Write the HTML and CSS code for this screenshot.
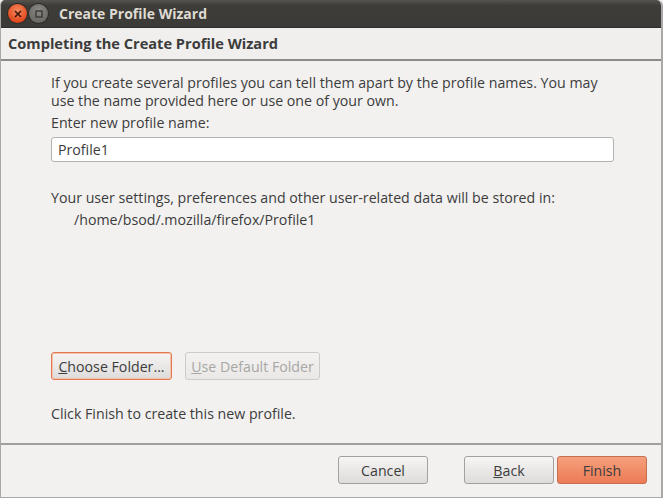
FILE: index.html
```html
<!DOCTYPE html>
<html lang="en">
<head>
	<meta charset="UTF-8">
	<title>Create Profile Wizard</title>
	<link rel="stylesheet" href="styles.css">
</head>
<body>
	<div class="window">
		<div class="titlebar">
			<span class="btn-close">
				<svg width="8" height="8" viewBox="0 0 8 8"><path d="M1 1L7 7M7 1L1 7" stroke="#3a1a10" stroke-width="1.6"/></svg>
			</span>
			<span class="btn-min">
				<svg width="8" height="8" viewBox="0 0 8 8"><rect x="1" y="1" width="6" height="6" fill="none" stroke="#3b3a36" stroke-width="1.4"/></svg>
			</span>
			<span class="title-text">Create Profile Wizard</span>
		</div>
		<div class="wizard-header">Completing the Create Profile Wizard</div>
		<div class="wizard-body">
			<p class="intro">If you create several profiles you can tell them apart by the profile names. You may use the name provided here or use one of your own.</p>
			<label class="field-label">Enter new profile name:</label>
			<input type="text" class="name-input" value="Profile1">
			<p class="store-text">Your user settings, preferences and other user-related data will be stored in:</p>
			<p class="store-path">/home/bsod/.mozilla/firefox/Profile1</p>
			<div class="folder-buttons">
				<button class="button focused"><u>C</u>hoose Folder...</button>
				<button class="button disabled"><u>U</u>se Default Folder</button>
			</div>
			<p class="finish-text">Click Finish to create this new profile.</p>
		</div>
		<div class="wizard-footer">
			<button class="button wide">Cancel</button>
			<div class="nav-buttons">
				<button class="button wide"><u>B</u>ack</button>
				<button class="button wide primary">Finish</button>
			</div>
		</div>
	</div>
</body>
</html>
```
FILE: styles.css
```css
* {
	margin: 0;
	padding: 0;
	box-sizing: border-box;
}
body {
	width: 663px;
	height: 498px;
	background: #f2f1f0;
	font-family: "Open Sans", "DejaVu Sans", sans-serif;
	font-size: 14.2px;
	color: #3c3c3c;
	overflow: hidden;
}
.window {
	width: 663px;
	height: 498px;
	display: flex;
	flex-direction: column;
	border-left: 1px solid #a9a8a6;
	border-right: 2px solid #a9a8a6;
	border-bottom: 1px solid #a9a8a6;
	border-radius: 5px 6px 0 0;
	background: #f2f1f0;
	overflow: hidden;
}
.titlebar {
	height: 28px;
	display: flex;
	align-items: center;
	padding-left: 7px;
	background: linear-gradient(#55534e, #3e3d39 20%, #3b3a36);
	border-bottom: 1px solid #2e2d2a;
}
.btn-close, .btn-min {
	width: 19px;
	height: 19px;
	border-radius: 50%;
	display: flex;
	align-items: center;
	justify-content: center;
}
.btn-close {
	background: radial-gradient(circle at 50% 35%, #f7895f, #e2491c 70%, #c73b12);
	box-shadow: 0 0 0 1px #2d2c29;
}
.btn-min {
	margin-left: 2px;
	background: radial-gradient(circle at 50% 35%, #8b8a86, #6b6a66 70%, #595854);
	box-shadow: 0 0 0 1px #2d2c29;
}
.title-text {
	margin-left: 11px;
	font-size: 14px;
	font-weight: bold;
	color: #dfdbd2;
}
.wizard-header {
	height: 33px;
	line-height: 31px;
	padding-left: 7px;
	font-size: 14.6px;
	font-weight: bold;
	color: #3c3c3c;
	background: #f0efed;
	border-bottom: 2px solid #8c8b89;
}
.wizard-body {
	flex: 1;
	padding: 13px 50px 0 50px;
	display: flex;
	flex-direction: column;
}
.intro {
	line-height: 18px;
	width: 560px;
}
.field-label {
	margin-top: 4px;
	line-height: 18px;
}
.name-input {
	margin-top: 5px;
	width: 563px;
	height: 25px;
	border: 1px solid #b3b2ae;
	border-radius: 3px;
	background: #fff;
	padding-left: 6px;
	font-family: inherit;
	font-size: 14.2px;
	color: #3c3c3c;
	outline: none;
}
.store-text {
	margin-top: 27px;
	line-height: 18px;
}
.store-path {
	margin-top: 4px;
	padding-left: 23px;
	line-height: 18px;
}
.folder-buttons {
	margin-top: 123px;
	display: flex;
	gap: 13px;
}
.button {
	height: 28px;
	padding: 0 3px;
	font-family: inherit;
	font-size: 14.2px;
	color: #3c3c3c;
	border: 1px solid #a3a19e;
	border-radius: 3px;
	background: linear-gradient(#f6f5f4, #dedcda);
	white-space: nowrap;
}
.button u {
	text-decoration: underline;
}
.button.focused {
	width: 121px;
	border-color: #e07a52;
	box-shadow: inset 0 0 0 1px #f6c2ac;
}
.button.disabled {
	width: 135px;
	color: #a8a7a5;
	border-color: #cdcbc8;
	background: linear-gradient(#f3f2f1, #e9e8e6);
}
.finish-text {
	margin-top: 25px;
	line-height: 18px;
}
.wizard-footer {
	height: 54px;
	border-top: 2px solid #a09f9c;
	display: flex;
	align-items: flex-start;
	justify-content: flex-end;
	padding: 11px 14px 0 0;
	gap: 36px;
}
.nav-buttons {
	display: flex;
	gap: 3px;
}
.button.wide {
	width: 90px;
}
.button.primary {
	border-color: #c46f4e;
	background: linear-gradient(#f6a07d, #ec7b56);
	color: #3c3c3c;
}
```
